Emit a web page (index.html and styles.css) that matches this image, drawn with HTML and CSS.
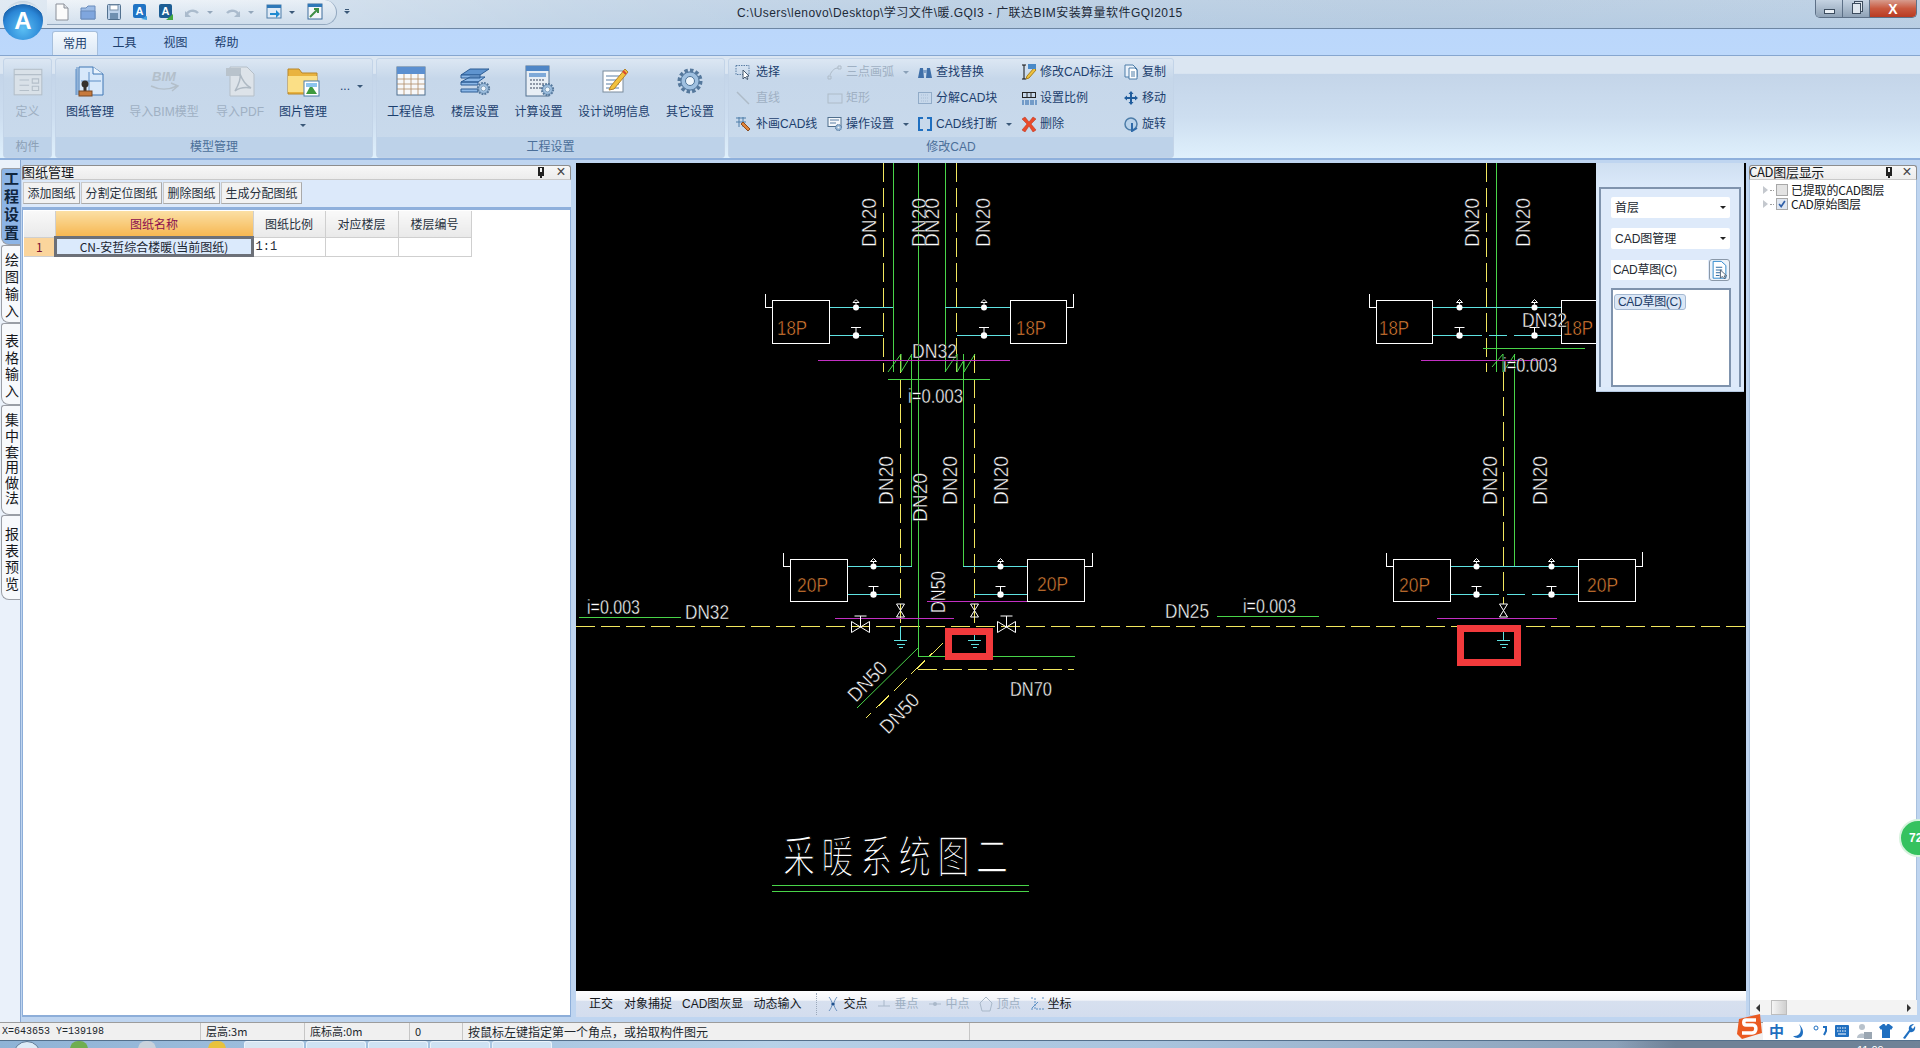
FILE: index.html
```html
<!DOCTYPE html>
<html lang="zh-CN">
<head>
<meta charset="utf-8">
<title>广联达BIM安装算量软件GQI2015</title>
<link rel="stylesheet" href="styles.css">
</head>
<body>
<svg class="defs" width="0" height="0" aria-hidden="true">
  <defs>
    <symbol id="gear" viewBox="0 0 32 32">
      <circle cx="16" cy="16" r="10" fill="#8fb4d8" stroke="#55789c" stroke-width="5" stroke-dasharray="3.2 2"/>
      <circle cx="16" cy="16" r="9" fill="#9fc0e0" stroke="#5b7ea3"/>
      <circle cx="16" cy="16" r="4.5" fill="#eef5fb" stroke="#4d7398"/>
    </symbol>
    <g id="vA"><path class="cy" d="M-4 0H4"/><circle class="wf" r="3"/><path class="wl" d="M0 -3V-5M-3 -5L0 -8L3 -5Z"/></g>
    <g id="vB"><path class="wl" d="M-5 -8H5M0 -8V0"/><circle class="wf" r="3.2"/></g>
    <path id="bowV" class="wl" d="M-4 -6.5H4L-4 6.5H4Z"/>
    <g id="bowH"><path class="wl" d="M-9 -5.5V5.5L9 -5.5V5.5ZM0 0V-11M-6 -11H6"/></g>
    <g id="gnd"><path class="cy" d="M-6.500 0.500H6.500M-4 4H4M-2 7H2"/></g>
  </defs>
</svg>

<header class="titlebar">
  <div class="orb"><span>A</span></div>
  <div class="qa">
    <svg class="qi" viewBox="0 0 16 18"><path d="M2 1H10L14 5V17H2Z" fill="#fbfbfb" stroke="#8a8f98"/><path d="M10 1V5H14" fill="#dfe3e8" stroke="#8a8f98"/></svg>
    <svg class="qi" viewBox="0 0 16 18"><path d="M1 5H6L8 3H15V16H1Z" fill="#9dbce6" stroke="#6a8cbc"/><path d="M1 8H15V16H1Z" fill="#7fa6de" stroke="#6a8cbc"/></svg>
    <svg class="qi" viewBox="0 0 16 18"><rect x="1.500" y="1.500" width="13" height="15" rx="1" fill="#bcd2ea" stroke="#52718f"/><rect x="4" y="2" width="8" height="5" fill="#fff" stroke="#7b92aa"/><rect x="4" y="10" width="8" height="6" fill="#6f90b0"/></svg>
    <svg class="qi" viewBox="0 0 16 18"><rect x="1" y="1" width="13" height="14" rx="2" fill="#1f73c4"/><text class="qa-a" x="7.500" y="12">A</text><path d="M9 16L15 13V17Z" fill="#3fa0e0"/></svg>
    <svg class="qi" viewBox="0 0 16 18"><rect x="1" y="1" width="13" height="14" rx="2" fill="#1c5d94"/><text class="qa-a" x="7.500" y="12">A</text><path d="M8 17L15 11V17Z" fill="#43a83f"/></svg>
    <svg class="qi qi-off" viewBox="0 0 16 18"><path d="M2 13A7 7 0 0 1 14 10" fill="none" stroke="#9fb1c4" stroke-width="2.500"/><path d="M1 8V14H7Z" fill="#9fb1c4"/></svg>
    <span class="caret caret-off"></span>
    <svg class="qi qi-off" viewBox="0 0 16 18"><path d="M14 13A7 7 0 0 0 2 10" fill="none" stroke="#9fb1c4" stroke-width="2.500"/><path d="M15 8V14H9Z" fill="#9fb1c4"/></svg>
    <span class="caret caret-off"></span>
    <svg class="qi" viewBox="0 0 16 18"><rect x="1" y="2" width="14" height="13" fill="#dfeaf6" stroke="#4c7ca8"/><rect x="1" y="2" width="14" height="3" fill="#2f78b8"/><path d="M4 10H10V7L14 11L10 15V12H4Z" fill="#1f8ad0"/></svg>
    <span class="caret"></span>
    <svg class="qi" viewBox="0 0 16 18"><rect x="1" y="1" width="14" height="15" fill="#f3f6fa" stroke="#3c6d9c"/><rect x="1" y="1" width="14" height="3" fill="#2f78b8"/><path d="M3 14L11 6M7 6H11V10" fill="none" stroke="#3f8f45" stroke-width="2"/></svg>
  </div>
  <span class="caret caret-more"></span>
  <h1 class="wintitle">C:\Users\lenovo\Desktop\学习文件\暖.GQI3 - 广联达BIM安装算量软件GQI2015</h1>
  <div class="winctl">
    <span class="wc wc-min"><i></i></span>
    <span class="wc wc-max"><i></i></span>
    <span class="wc wc-close">X</span>
  </div>
</header>

<nav class="tabs">
  <span class="tab tab-on">常用</span>
  <span class="tab">工具</span>
  <span class="tab">视图</span>
  <span class="tab">帮助</span>
</nav>

<section class="ribbon">
  <div class="group g-def">
    <div class="gbody">
      <div class="big off w-def">
        <svg class="bi" viewBox="0 0 32 32"><rect x="3" y="5" width="26" height="24" fill="#d9e1e8" stroke="#b4bfc9"/><path d="M3 10H29M8 15H17M8 20H17M8 25H17M20 14H26V18H20ZM20 21H26V25H20Z" fill="none" stroke="#b4bfc9"/></svg>
        <span>定义</span>
      </div>
    </div>
    <div class="glabel off-l">构件</div>
  </div>

  <div class="group g-model">
    <div class="gbody">
      <div class="big w-58">
        <svg class="bi" viewBox="0 0 34 34"><path d="M6 3H20L30 10V31H6Z" fill="#d7e8fa" stroke="#3f77b4"/><path d="M3 5V31M4 3V31" stroke="#5d8ec6"/><path d="M20 3V10H30" fill="#eaf3fc" stroke="#3f77b4"/><path d="M16 8V30M8 17H28" stroke="#5d8ec6"/><circle cx="12" cy="20" r="3.500" fill="#34302c"/><rect x="10.500" y="22" width="3" height="5" fill="#34302c"/><rect x="6" y="27" width="13" height="5" fill="#c77a3c" stroke="#7a4a26"/></svg>
        <span>图纸管理</span>
      </div>
      <div class="big off w-90">
        <svg class="bi" viewBox="0 0 34 34"><text class="bim" x="17" y="17">BIM</text><path d="M4 22C12 26 22 26 30 22M24 19L31 22L25 27" fill="none" stroke="#b3bfca" stroke-width="1.500"/></svg>
        <span>导入BIM模型</span>
      </div>
      <div class="big off w-62">
        <svg class="bi" viewBox="0 0 34 34"><path d="M7 3H24L31 10V32H7Z" fill="#dde3e9" stroke="#b5bfc8"/><rect x="3" y="4" width="15" height="8" fill="#b9c3cc"/><path d="M12 27C16 20 18 14 17 10C20 18 24 22 28 24C22 23 16 24 12 27Z" fill="none" stroke="#aeb9c3" stroke-width="1.500"/></svg>
        <span>导入PDF</span>
      </div>
      <div class="big w-64">
        <svg class="bi" viewBox="0 0 34 34"><path d="M2 5H13L16 9H31V30H2Z" fill="#e9b33f" stroke="#b9872a"/><path d="M2 12H31V28H2Z" fill="#fbdf86"/><rect x="18" y="17" width="15" height="15" fill="#fff" stroke="#4f7fa8"/><path d="M20 30L25 21L31 30Z" fill="#3e9a3e"/><rect x="20" y="19" width="11" height="4" fill="#8cc4ee"/></svg>
        <span>图片管理</span>
        <i class="caret big-caret"></i>
      </div>
      <div class="more"><span>...</span><i class="caret"></i></div>
    </div>
    <div class="glabel">模型管理</div>
  </div>

  <div class="group g-proj">
    <div class="gbody">
      <div class="big w-64">
        <svg class="bi" viewBox="0 0 34 34"><rect x="3" y="3" width="28" height="28" fill="#f7f8fa" stroke="#51708f"/><rect x="3" y="3" width="28" height="7" fill="#5b8fd0"/><path d="M3 15H31M3 20H31M3 25H31M10 10V31M17 10V31M24 10V31" stroke="#b08a66" stroke-width=".8"/></svg>
        <span>工程信息</span>
      </div>
      <div class="big w-64">
        <svg class="bi" viewBox="0 0 34 34"><path d="M3 11L12 5H31L22 11Z" fill="#5f94cf" stroke="#2d5d94"/><path d="M3 11H22V14H3ZM3 18L12 13H27L20 18ZM3 18H20V21H3ZM3 25H20V28H3Z" fill="#8cb8e8" stroke="#2d5d94"/><use href="#gear" x="17" y="16" width="17" height="17"/></svg>
        <span>楼层设置</span>
      </div>
      <div class="big w-63">
        <svg class="bi" viewBox="0 0 34 34"><rect x="4" y="2" width="23" height="30" fill="#e8eef5" stroke="#53718f"/><rect x="4" y="2" width="23" height="5" fill="#4f86c6"/><rect x="7" y="9" width="17" height="4" fill="#7fa9d8"/><path d="M8 16H23M8 20H23M8 24H23" stroke="#8f98a8" stroke-width="2" stroke-dasharray="2 1"/><use href="#gear" x="17" y="17" width="17" height="17"/></svg>
        <span>计算设置</span>
      </div>
      <div class="big w-88">
        <svg class="bi" viewBox="0 0 34 34"><rect x="6" y="7" width="20" height="21" fill="#fff" stroke="#7a8b9c"/><path d="M9 12H22M9 16H22M9 20H22M9 24H22" stroke="#5a7ea5"/><path d="M14 22L28 5L31 8L17 25L12 26Z" fill="#f2c23e" stroke="#b2802a"/><path d="M26 7L29 10" stroke="#d8442e" stroke-width="2"/></svg>
        <span>设计说明信息</span>
      </div>
      <div class="big w-64">
        <svg class="bi" viewBox="0 0 34 34"><use href="#gear" x="1" y="1" width="32" height="32"/></svg>
        <span>其它设置</span>
      </div>
    </div>
    <div class="glabel">工程设置</div>
  </div>

  <div class="group g-cad">
    <div class="gbody smalls">
      <div class="sm c1st"><svg class="si" viewBox="0 0 16 16"><rect x="1" y="1.500" width="13" height="9" fill="none" stroke="#5a7ea5" stroke-dasharray="1.500 1"/><path d="M8 6V15L10 13L12 15.500L13 15L11.500 12.500L14 12Z" fill="#fff" stroke="#44586e"/></svg><span>选择</span></div>
      <div class="sm off"><svg class="si" viewBox="0 0 16 16"><path d="M1 15V12H4V15ZM3 11C5 6 8 4 11 4M11 2H14V5H11Z" fill="none" stroke="#aebbc8"/></svg><span>三点画弧</span><i class="caret caret-off"></i></div>
      <div class="sm"><svg class="si" viewBox="0 0 16 16"><path d="M3 4H6L7 14H1ZM10 4H13L15 14H9Z" fill="#3f6fa8"/><path d="M6 6H10V9H6Z" fill="#7ea0c8"/></svg><span>查找替换</span></div>
      <div class="sm"><svg class="si si-cad" viewBox="0 0 16 16"><path d="M3 1V15" stroke="#111"/><path d="M1 1H5M1 15H5" stroke="#111"/><path d="M6 12L13 4L15 6L8 14L5 15Z" fill="#f0c23c" stroke="#a67f20"/><rect x="7" y="0" width="8" height="5" fill="#4a8ac8"/></svg><span>修改CAD标注</span></div>
      <div class="sm"><svg class="si" viewBox="0 0 16 16"><path d="M2 1H10L14 5V13H2Z" fill="#eaf2fb" stroke="#4c7ca8"/><path d="M6 4H12L14 6V15H6Z" fill="#fff" stroke="#4c7ca8"/><path d="M8 8H12M8 10H12M8 12H12" stroke="#4c7ca8"/></svg><span>复制</span></div>

      <div class="sm off c1st"><svg class="si" viewBox="0 0 16 16"><path d="M2 2L14 14" stroke="#aebbc8" stroke-width="1.500"/></svg><span>直线</span></div>
      <div class="sm off"><svg class="si" viewBox="0 0 16 16"><rect x="1" y="4" width="14" height="9" fill="none" stroke="#aebbc8"/></svg><span>矩形</span></div>
      <div class="sm"><svg class="si" viewBox="0 0 16 16"><rect x="1.500" y="2.500" width="13" height="11" fill="none" stroke="#5a7ea5" stroke-dasharray="1 1"/><path d="M4 5H12M4 8H12M4 11H12" stroke="#a9bed6" stroke-dasharray="1 1"/></svg><span>分解CAD块</span></div>
      <div class="sm"><svg class="si" viewBox="0 0 16 16"><rect x="1.500" y="2.500" width="13" height="5" fill="none" stroke="#222"/><path d="M6 3V7M10 3V7" stroke="#222"/><path d="M2 10V15M5 10V15M7 10V15M10 10V15M12 10V15M15 10V15" stroke="#1f5fa5"/></svg><span>设置比例</span></div>
      <div class="sm"><svg class="si" viewBox="0 0 16 16"><path d="M8 1L10.500 4H9V7H12V5.500L15 8L12 10.500V9H9V12H10.500L8 15L5.500 12H7V9H4V10.500L1 8L4 5.500V7H7V4H5.500Z" fill="#1f5c9c"/></svg><span>移动</span></div>

      <div class="sm c1st"><svg class="si" viewBox="0 0 16 16"><path d="M1 2H11M1 6H11M4 1V11M8 1V11" stroke="#4c7ca8"/><path d="M6 8L13 15L15 13L8 6Z" fill="#e0853a" stroke="#8a4c20"/></svg><span>补画CAD线</span></div>
      <div class="sm"><svg class="si" viewBox="0 0 16 16"><rect x="1" y="1.500" width="13" height="9" fill="#f3f7fb" stroke="#4f6e8c"/><path d="M3 4H12M3 7H9" stroke="#5a7ea5"/><use href="#gear" x="7" y="7" width="9" height="9"/></svg><span>操作设置</span><i class="caret"></i></div>
      <div class="sm"><svg class="si" viewBox="0 0 16 16"><path d="M6 2H2V14H6M10 2H14V14H10" fill="none" stroke="#1f6fc0" stroke-width="2"/></svg><span>CAD线打断</span><i class="caret"></i></div>
      <div class="sm"><svg class="si" viewBox="0 0 16 16"><path d="M1 3L4 1L8 6L12 1L15 3L10 8L15 14L12 16L8 10L4 16L1 14L6 8Z" fill="#ea4a2a" stroke="#b63018" stroke-width=".5"/></svg><span>删除</span></div>
      <div class="sm"><svg class="si" viewBox="0 0 16 16"><circle cx="8" cy="8" r="6" fill="#b9d2ea" stroke="#4c7ca8" stroke-width="1.500"/><path d="M9 7V15L14 12" fill="none" stroke="#2f6aa8" stroke-width="2"/></svg><span>旋转</span></div>
    </div>
    <div class="glabel">修改CAD</div>
  </div>
</section>

<main class="main">
  <aside class="vtabs">
    <span class="vt vt-on">工程设置</span>
    <span class="vt vt-a">绘图输入</span>
    <span class="vt vt-b">表格输入</span>
    <span class="vt vt-c">集中套用做法</span>
    <span class="vt vt-d">报表预览</span>
  </aside>

  <section class="left">
    <div class="ptitle"><span>图纸管理</span><b class="pin"></b><b class="px">×</b></div>
    <div class="toolbar">
      <button class="tb">添加图纸</button><button class="tb">分割定位图纸</button><button class="tb">删除图纸</button><button class="tb">生成分配图纸</button>
    </div>
    <div class="gridwrap">
      <table class="sheet">
        <thead>
          <tr><th class="c0"></th><th class="c1 hot">图纸名称</th><th class="c2">图纸比例</th><th class="c3">对应楼层</th><th class="c3">楼层编号</th></tr>
        </thead>
        <tbody>
          <tr><td class="rowno">1</td><td class="sel">CN-安哲综合楼暖(当前图纸)</td><td class="lft">1:1</td><td></td><td></td></tr>
        </tbody>
      </table>
    </div>
  </section>

  <section class="center">
    <div class="canvas">
      <svg class="cad" viewBox="576 163 1170 828">
        <g class="yl">
          <path d="M883.500 163V372M956.500 163V372M900.500 354V626M974.500 354V626"/>
          <path d="M1486.500 163V372M1503.500 372V604"/>
          <path d="M576 626.500H1746"/>
          <path d="M918 669.500H1074M943 643L866 718"/>
        </g>
        <g class="gr">
          <path d="M893.500 163V372M918.500 163V656.500H1075M945.500 163V372M911.500 354V566.500H848M963.500 354V566.500H1027"/>
          <path d="M888 379.500H990M579 617.500H681M1217 616.500H1319M772 885.500H1029M772 891.500H1029"/>
          <path d="M1496.500 163V372M1514.500 354V566.500M1483 348.500H1585"/>
          <path class="sl" d="M888 372L901 354V372L912 354M945 372L957 354V372L964 360V372L975 354M1492 367L1503 354V372L1515 354M918 648L857 708"/>
        </g>
        <g class="mg">
          <path d="M818 360.500H1010M835 618.500H954M927 601.500H1027M1421 360.500H1540M1437 618.500H1557"/>
        </g>
        <g class="cy">
          <path d="M830 307.500H893M830 335.500H883M945 307.500H1010M957 335.500H1010"/>
          <path d="M848 566.500H912M848 594.500H900M963 566.500H1027M974 594.500H1027"/>
          <path d="M1433 307.500H1561M1433 335.500H1482M1489 335.500H1507M1514 335.500H1561"/>
          <path d="M1451 566.500H1578M1451 594.500H1499M1507 594.500H1525M1532 594.500H1578"/>
          <path d="M900.500 626V640M974.500 635V640M1503.500 626V640"/>
        </g>
        <g class="wh">
          <rect x="772.500" y="300.500" width="57" height="43"/><rect x="1010.500" y="300.500" width="56" height="43"/>
          <path d="M765.500 294V307.500H772M1073.500 294V307.500H1067"/>
          <rect x="790.500" y="559.500" width="57" height="42"/><rect x="1027.500" y="559.500" width="57" height="42"/>
          <path d="M783.500 553V566.500H790M1092.500 553V566.500H1085"/>
          <rect x="1376.500" y="300.500" width="56" height="43"/><rect x="1561.500" y="300.500" width="60" height="43"/>
          <path d="M1369.500 294V307.500H1376"/>
          <rect x="1393.500" y="559.500" width="57" height="42"/><rect x="1578.500" y="559.500" width="57" height="42"/>
          <path d="M1386.500 553V566.500H1393M1642.500 552V566.500H1636"/>
        </g>
        <use href="#vA" x="856" y="307.500"/><use href="#vB" x="856" y="335.500"/>
        <use href="#vA" x="984" y="307.500"/><use href="#vB" x="984" y="335.500"/>
        <use href="#vA" x="873.500" y="566.500"/><use href="#vB" x="873.500" y="594.500"/>
        <use href="#vA" x="1000.500" y="566.500"/><use href="#vB" x="1000.500" y="594.500"/>
        <use href="#vA" x="1459.500" y="307.500"/><use href="#vB" x="1459.500" y="335.500"/>
        <use href="#vA" x="1534.500" y="307.500"/><use href="#vB" x="1534.500" y="335.500"/>
        <use href="#vA" x="1476.500" y="566.500"/><use href="#vB" x="1476.500" y="594.500"/>
        <use href="#vA" x="1551.500" y="566.500"/><use href="#vB" x="1551.500" y="594.500"/>
        <use href="#bowV" x="900.500" y="610.500"/><use href="#bowV" x="974.500" y="610.500"/><use href="#bowV" x="1503.500" y="610.500"/>
        <use href="#bowH" x="860.500" y="627"/><use href="#bowH" x="1006.500" y="627"/>
        <use href="#gnd" x="900.500" y="640"/><use href="#gnd" x="974.500" y="640"/><use href="#gnd" x="1503.500" y="640"/>

        <rect class="redbox" x="948.500" y="631.500" width="41" height="25"/>
        <rect class="redbox" x="1460.500" y="628.500" width="57" height="34"/>

        <g class="cadt">
          <text transform="translate(876 247) rotate(-90)" textLength="49" lengthAdjust="spacingAndGlyphs">DN20</text>
          <text transform="translate(926 247) rotate(-90)" textLength="49" lengthAdjust="spacingAndGlyphs">DN20</text>
          <text transform="translate(939 247) rotate(-90)" textLength="49" lengthAdjust="spacingAndGlyphs">DN20</text>
          <text transform="translate(990 247) rotate(-90)" textLength="49" lengthAdjust="spacingAndGlyphs">DN20</text>
          <text transform="translate(893 505) rotate(-90)" textLength="49" lengthAdjust="spacingAndGlyphs">DN20</text>
          <text transform="translate(927 522) rotate(-90)" textLength="49" lengthAdjust="spacingAndGlyphs">DN20</text>
          <text transform="translate(957 505) rotate(-90)" textLength="49" lengthAdjust="spacingAndGlyphs">DN20</text>
          <text transform="translate(1008 505) rotate(-90)" textLength="49" lengthAdjust="spacingAndGlyphs">DN20</text>
          <text transform="translate(945 613) rotate(-90)" textLength="42" lengthAdjust="spacingAndGlyphs">DN50</text>
          <text transform="translate(1479 247) rotate(-90)" textLength="49" lengthAdjust="spacingAndGlyphs">DN20</text>
          <text transform="translate(1530 247) rotate(-90)" textLength="49" lengthAdjust="spacingAndGlyphs">DN20</text>
          <text transform="translate(1497 505) rotate(-90)" textLength="49" lengthAdjust="spacingAndGlyphs">DN20</text>
          <text transform="translate(1547 505) rotate(-90)" textLength="49" lengthAdjust="spacingAndGlyphs">DN20</text>
          <text transform="translate(856 703) rotate(-46)" textLength="47" lengthAdjust="spacingAndGlyphs">DN50</text>
          <text transform="translate(888 735) rotate(-46)" textLength="47" lengthAdjust="spacingAndGlyphs">DN50</text>
          <text x="912" y="358" textLength="45" lengthAdjust="spacingAndGlyphs">DN32</text>
          <text x="685" y="619" textLength="44" lengthAdjust="spacingAndGlyphs">DN32</text>
          <text x="1522" y="327" textLength="45" lengthAdjust="spacingAndGlyphs">DN32</text>
          <text x="1010" y="696" textLength="42" lengthAdjust="spacingAndGlyphs">DN70</text>
          <text x="1165" y="618" textLength="44" lengthAdjust="spacingAndGlyphs">DN25</text>
          <text x="908" y="403" textLength="55" lengthAdjust="spacingAndGlyphs">i=0.003</text>
          <text x="587" y="614" textLength="53" lengthAdjust="spacingAndGlyphs">i=0.003</text>
          <text x="1503" y="372" textLength="54" lengthAdjust="spacingAndGlyphs">i=0.003</text>
          <text x="1243" y="613" textLength="53" lengthAdjust="spacingAndGlyphs">i=0.003</text>
        </g>
        <g class="capt">
          <text x="777" y="335" textLength="30" lengthAdjust="spacingAndGlyphs">18P</text>
          <text x="1016" y="335" textLength="30" lengthAdjust="spacingAndGlyphs">18P</text>
          <text x="1379" y="335" textLength="30" lengthAdjust="spacingAndGlyphs">18P</text>
          <text x="1563" y="335" textLength="30" lengthAdjust="spacingAndGlyphs">18P</text>
          <text x="797" y="592" textLength="31" lengthAdjust="spacingAndGlyphs">20P</text>
          <text x="1037" y="591" textLength="31" lengthAdjust="spacingAndGlyphs">20P</text>
          <text x="1399" y="592" textLength="31" lengthAdjust="spacingAndGlyphs">20P</text>
          <text x="1587" y="592" textLength="31" lengthAdjust="spacingAndGlyphs">20P</text>
        </g>
        <text class="cadtitle" transform="translate(783 873) scale(1 1.4)" textLength="225" lengthAdjust="spacing">采暖系统图二</text>
      </svg>
      <div class="floating">
        <div class="fl-inner">
          <div class="combo"><span>首层</span><i class="cdrop"></i></div>
          <div class="combo"><span>CAD图管理</span><i class="cdrop"></i></div>
          <div class="inputrow">
            <div class="input">CAD草图(C)</div>
            <span class="ibtn"><svg viewBox="0 0 20 22"><path d="M3 1.500H12L17 6V20H3Z" fill="#fff" stroke="#1f7fc8"/><path d="M6 8H13M6 11H13M6 14H11M6 17H10" stroke="#1b5d97"/><path d="M11 11V20L13 18L15 20.500L16.500 20L15 17.500H18Z" fill="#fff" stroke="#4a5c6e"/></svg></span>
          </div>
          <div class="listbox"><span class="chip">CAD草图(C)</span></div>
        </div>
      </div>
    </div>
    <div class="snapbar">
      <span class="sn sn1">正交</span><span class="sn sn2">对象捕捉</span><span class="sn sn3">CAD图灰显</span><span class="sn sn4">动态输入</span>
      <i class="snsep"></i>
      <span class="sni"><svg viewBox="0 0 14 16"><path d="M3 1C7 6 7 10 3 15M11 1C7 6 7 10 11 15" fill="none" stroke="#6d93c0"/><circle cx="7" cy="8" r="1.500" fill="#1d4f8c"/></svg><b>交点</b></span>
      <span class="sni off"><svg viewBox="0 0 14 16"><path d="M1 10H13M7 4V10" stroke="#a9b8c9"/></svg><b>垂点</b></span>
      <span class="sni off"><svg viewBox="0 0 14 16"><path d="M1 8H13" stroke="#a9b8c9"/><circle cx="7" cy="8" r="2" fill="#a9b8c9"/></svg><b>中点</b></span>
      <span class="sni off"><svg viewBox="0 0 14 16"><path d="M7 1L13 7L11 15H3L1 7Z" fill="none" stroke="#a9b8c9"/></svg><b>顶点</b></span>
      <span class="sni"><svg viewBox="0 0 14 16"><path d="M5 2V13H14" fill="none" stroke="#5a8fc4" stroke-dasharray="2 1"/><path d="M1 2H3M12 2H14M1 13H3" stroke="#5a8fc4"/><path d="M2 12L8 6" stroke="#5a8fc4"/></svg><b>坐标</b></span>
    </div>
  </section>

  <aside class="right">
    <div class="ptitle ptitle-r"><span>CAD图层显示</span><b class="pin"></b><b class="px">×</b></div>
    <div class="tree">
      <div class="node"><i class="exp"></i><i class="lead"></i><i class="chk"></i><span>已提取的CAD图层</span></div>
      <div class="node"><i class="exp"></i><i class="lead"></i><i class="chk chk-on"><svg viewBox="0 0 12 12"><path d="M2.500 6L5 9L9.500 2.500" fill="none" stroke="#2f5fa8" stroke-width="2"/></svg></i><span>CAD原始图层</span></div>
    </div>
    <div class="hscroll"><i class="arrow-l"></i><b class="thumb"></b><i class="arrow-r"></i></div>
  </aside>
</main>

<footer class="status">
  <span class="st st1">X=643653 Y=139198</span>
  <span class="st st2">层高:3m</span>
  <span class="st st3">底标高:0m</span>
  <span class="st st4">0</span>
  <span class="st st5">按鼠标左键指定第一个角点，或拾取构件图元</span>
  <span class="st st6"></span>
</footer>

<div class="taskbar">
  <i class="start"></i>
  <i class="tk-ic tk-a"></i><i class="tk-ic tk-b"></i><i class="tk-ic tk-c"></i>
  <i class="tk tk1"></i><i class="tk"></i><i class="tk"></i><i class="tk"></i><i class="tk"></i>
  <span class="tray"><span class="clock">11:09</span></span>
</div>

<div class="badge72"><span>72</span></div>

<div class="ime">
  <svg class="ime-s" viewBox="0 0 27 27"><path d="M3 6L24 1L26 20L6 26L1 21Z" fill="#ea5a21"/><path d="M20 7H10C7 7 7 12 10 12H17C21 12 21 20 16 20H6" fill="none" stroke="#fff" stroke-width="3.500"/></svg>
  <div class="ime-bar">
    <b class="ime-zh">中</b>
    <svg viewBox="0 0 16 16"><path d="M9 1C13 7 10 14 3 13C6 16 13 16 13 9C13 6 11 3 9 1Z" fill="#1f6fc0"/></svg>
    <svg viewBox="0 0 16 16"><circle cx="4" cy="5" r="2" fill="none" stroke="#1f6fc0"/><path d="M11 4H14V8L12 12" fill="none" stroke="#1f6fc0" stroke-width="2"/></svg>
    <svg viewBox="0 0 16 16"><rect x="1" y="2" width="14" height="12" rx="1" fill="#1f6fc0"/><path d="M3 5H13M3 8H13" stroke="#fff" stroke-dasharray="1.500 1"/><path d="M4 11H12" stroke="#fff"/></svg>
    <svg viewBox="0 0 16 16"><circle cx="6" cy="4" r="3" fill="#b8c2cc"/><path d="M1 15C1 9 11 9 11 15Z" fill="#b8c2cc"/><rect x="8" y="9" width="8" height="7" fill="#9aa6b2"/></svg>
    <svg viewBox="0 0 16 16"><path d="M5 1L1 4L3 7L4 6V15H12V6L13 7L15 4L11 1H9.500L8 3L6.500 1Z" fill="#1f6fc0"/></svg>
    <svg viewBox="0 0 16 16"><path d="M3 15L9 7C8 3 11 1 14 1L11 4L13 6L15 3C16 7 13 10 10 9L5 16Z" fill="#1f6fc0"/></svg>
  </div>
</div>
</body>
</html>
```

FILE: styles.css
```css
* { box-sizing: border-box; }
html, body { margin: 0; padding: 0; }
body {
  position: relative;
  width: 1920px;
  height: 1048px;
  overflow: hidden;
  display: flex;
  flex-direction: column;
  background: #bfd5f0;
  font: 12px/16px "Liberation Sans", "Noto Sans CJK SC", sans-serif;
  color: #1c3f6e;
}
.defs { position: absolute; }

/* title bar */
.titlebar {
  position: relative;
  flex: none;
  height: 29px;
  display: flex;
  align-items: flex-start;
  padding-left: 47px;
  border-bottom: 1px solid #6d86a3;
  background:
    linear-gradient(90deg, rgba(255,255,255,.55) 0, rgba(255,255,255,.18) 30%, rgba(255,255,255,.05) 50%, rgba(190,205,222,.2) 75%, rgba(255,255,255,.05) 100%),
    linear-gradient(180deg, #bcd0e4, #b4cbe2);
}
.orb {
  position: absolute;
  left: 3px; top: 1px;
  width: 40px; height: 39px;
  border-radius: 50%;
  z-index: 3;
  display: flex;
  align-items: center;
  justify-content: center;
  background: radial-gradient(circle at 50% 70%, #5cc0f4 0, #2a86d6 55%, #1c66b0 70%, #dbe6ef 72%, #8fa6bc 100%);
}
.orb span { font: bold 24px/1 "Liberation Sans", sans-serif; color: #fff; }
.qa {
  display: flex;
  align-items: center;
  gap: 10px;
  width: 290px;
  height: 25px;
  padding-left: 7px;
  border: 1px solid #93a9c0;
  border-top: 0;
  border-left: 0;
  border-radius: 0 0 14px 0 / 0 0 14px 0;
  border-top-right-radius: 14px;
  background: linear-gradient(180deg, rgba(255,255,255,.5), rgba(205,220,235,.5));
}
.qi { width: 16px; height: 18px; flex: none; }
.qi-off { opacity: .8; }
.qa-a { font: bold 11px/1 "Liberation Sans", sans-serif; fill: #fff; text-anchor: middle; }
.caret {
  display: inline-block;
  width: 0; height: 0;
  border-left: 3px solid transparent;
  border-right: 3px solid transparent;
  border-top: 3px solid #3a5878;
  flex: none;
}
.qa .caret { margin-left: -3px; margin-right: 2px; }
.caret-off { opacity: .45; }
.caret-more { margin: 11px 0 0 7px; box-shadow: 0 -3px 0 -1px #3a5878; }
.wintitle {
  position: absolute;
  left: 737px; top: 5px;
  margin: 0;
  font: 12px/16px "Liberation Sans", "Noto Sans CJK SC", sans-serif;
  letter-spacing: .45px;
  color: #1d2a38;
  white-space: nowrap;
}
.winctl {
  margin-left: auto;
  margin-right: 3px;
  display: flex;
  height: 18px;
  border: 1px solid #5d7087;
  border-top: 0;
  border-radius: 0 0 5px 5px;
  overflow: hidden;
}
.wc { display: flex; align-items: center; justify-content: center; height: 17px; }
.wc-min, .wc-max { width: 27px; background: linear-gradient(180deg, #c5d3e2, #8fa2b6); border-right: 1px solid #5d7087; }
.wc-min i { display: block; width: 11px; height: 5px; margin-top: 5px; background: #eaf0f6; border: 1px solid #3c4c5e; }
.wc-max i { display: block; width: 9px; height: 11px; background: #dfe7ef; border: 1px solid #3c4c5e; box-shadow: 2px -2px 0 -1px #dfe7ef, 2px -2px 0 0 #3c4c5e; }
.wc-close { width: 46px; background: linear-gradient(180deg, #d79c8e 0, #c9593f 50%, #b83a22 100%); color: #fff; font: bold 14px/1 "Liberation Sans", sans-serif; }

/* tabs */
.tabs {
  flex: none;
  height: 26px;
  display: flex;
  padding-left: 52px;
  background: linear-gradient(180deg, #bbd7fb, #bcd8fb);
}
.tab { width: 51px; text-align: center; line-height: 28px; }
.tab-on {
  width: 46px;
  margin: 2px 1px 0 0;
  line-height: 24px;
  background: linear-gradient(180deg, #f4f9fe, #dce8f5);
  border: 1px solid #a6bfdc;
  border-bottom: 0;
  border-radius: 3px 3px 0 0;
}

/* ribbon */
.ribbon {
  flex: none;
  height: 105px;
  display: flex;
  padding: 2px 3px 0 3px;
  gap: 3px;
  border-top: 1px solid #86a6cf;
  border-bottom: 2px solid #8eb0dc;
  background: linear-gradient(180deg, #dbe6f2 0, #dbe6f2 17%, #c4d5e9 18%, #cddef0 60%, #dff0fc 100%);
}
.group {
  display: flex;
  flex-direction: column;
  border: 1px solid #c3d4e8;
  border-radius: 3px;
  background: linear-gradient(180deg, #dce7f3 0, #c6d7ea 20%, #c9daec 100%);
}
.g-def { width: 49px; }
.g-model { width: 318px; }
.g-proj { width: 349px; }
.g-cad { width: 446px; }
.gbody { flex: 1; display: flex; padding-top: 5px; min-height: 0; }
.g-model .gbody { padding-left: 5px; }
.g-proj .gbody { padding-left: 2px; }
.glabel {
  flex: none;
  height: 20px;
  line-height: 21px;
  text-align: center;
  color: #4b6f99;
  background: #bdd2e9;
}
.off-l { color: #8ca0b6; }
.big {
  position: relative;
  flex: none;
  display: flex;
  flex-direction: column;
  align-items: center;
  white-space: nowrap;
}
.big span { margin-top: 6px; }
.bi { width: 34px; height: 34px; flex: none; }
.off, .off span, .off b { color: #9fb0c3; }
.w-def { width: 47px; }
.w-58 { width: 58px; }
.w-90 { width: 90px; }
.w-62 { width: 62px; }
.w-64 { width: 64px; }
.w-63 { width: 63px; }
.w-88 { width: 88px; }
.big-caret { margin-top: 4px; }
.more { display: flex; align-items: center; gap: 7px; height: 24px; margin: 10px 0 0 5px; color: #1c3f6e; }
.bim { font: italic bold 13px/1 "Liberation Sans", sans-serif; fill: #b3bfca; text-anchor: middle; }

.smalls {
  display: grid;
  grid-template-columns: 92px 90px 104px 102px 1fr;
  grid-auto-rows: 26px;
  padding: 0 0 0 6px;
  align-content: start;
}
.sm { display: flex; align-items: center; gap: 3px; white-space: nowrap; }
.c1st { gap: 5px; }
.sm .caret { margin-left: 6px; }
.si { width: 16px; height: 16px; flex: none; }

/* main */
.main { flex: 1; min-height: 0; display: flex; }
.vtabs {
  flex: none;
  width: 21px;
  display: flex;
  flex-direction: column;
  padding-top: 8px;
  background: #eaf1fa;
  border-right: 1px solid #8aa9d3;
}
.vt {
  writing-mode: vertical-rl;
  text-orientation: upright;
  display: block;
  flex: none;
  width: 19px;
  margin-left: 1px;
  font: 14px/17px "Noto Sans CJK SC", sans-serif;
  letter-spacing: 3px;
  white-space: nowrap;
  color: #16181c;
  background: #f7f9fc;
  border: 1px solid #9a9ea6;
  border-right: 0;
  border-radius: 3px 0 0 8px;
  text-align: center;
  overflow: hidden;
}
.vt-on { height: 77px; background: #8cb4e6; font-weight: 700; color: #10263f; font-size: 15px; letter-spacing: 3px; }
.vt-a { height: 78px; padding-top: 6px; }
.vt-b { height: 82px; padding-top: 6px; letter-spacing: 2.500px; }
.vt-c { height: 110px; padding-top: 0; letter-spacing: 1.600px; }
.vt-d { height: 85px; padding-top: 4px; letter-spacing: 2.500px; }

.left {
  flex: none;
  width: 552px;
  display: flex;
  flex-direction: column;
  padding: 5px 2px 5px 1px;
  background: #bfd5f0;
}
.ptitle {
  flex: none;
  height: 15px;
  display: flex;
  align-items: center;
  padding-bottom: 2px;
  background: linear-gradient(180deg, #f7f7f7, #ececec);
  border: 1px solid #8d8d8d;
  border-bottom-color: #c9c9c9;
  border-radius: 3px 3px 0 0;
  font: 13px/13px "Noto Sans CJK SC", sans-serif;
  color: #15181c;
}
.ptitle span { margin-left: -1px; }
.pin {
  width: 6px; height: 9px;
  margin-left: auto;
  border: 2px solid #222;
  border-bottom-width: 4px;
  border-top-width: 1px;
  position: relative;
}
.pin::after { content: ""; position: absolute; left: 0; top: 6px; width: 2px; height: 4px; background: #222; }
.px { width: 18px; margin-left: 8px; font: normal 16px/12px "Liberation Sans", sans-serif; color: #444; text-align: center; }
.toolbar {
  flex: none;
  height: 30px;
  display: flex;
  align-items: flex-start;
  padding: 2px 0 0 1px;
  gap: 1px;
  background: #dce9fa;
  border-bottom: 3px solid #8fb0dc;
}
.tb {
  height: 22px;
  padding: 0 3.500px;
  margin: 0;
  font: 12px/20px "Noto Sans CJK SC", sans-serif;
  color: #26303c;
  background: #f2f2f2;
  border: 1px solid #c8c8c8;
  border-right-color: #a9a9a9;
  border-bottom-color: #a9a9a9;
}
.gridwrap {
  flex: 1;
  padding: 1px 0 0 1px;
  background: #fff;
  border-left: 1px solid #8daed9;
  border-right: 1px solid #8daed9;
  border-bottom: 2px solid #8daed9;
}
.sheet { border-collapse: collapse; table-layout: fixed; width: 447px; }
.sheet th, .sheet td {
  padding: 0;
  font: normal 12px/16px "Noto Sans CJK SC", sans-serif;
  text-align: center;
  color: #26303c;
  border: 1px solid #cfcfcf;
}
.sheet th { height: 26px; background: linear-gradient(180deg, #f9f9f9, #e9e9e9); border-top: 0; }
.sheet td { height: 19px; }
.c0 { width: 31px; border-left: 0 !important; }
.c1 { width: 198px; }
.c2 { width: 72px; }
.c3 { width: 73px; }
.sheet .hot { background: linear-gradient(180deg, #fbdfa4, #f6b64f); color: #8b0f4f; }
.sheet .rowno { background: #fbd59c; color: #7a1232; border-left: 0; }
.sheet .sel { background: #dbeafc; outline: 3px solid #6c7078; outline-offset: -2px; color: #1a2430; }
.sheet .lft { text-align: left; padding-left: 2px; font-family: "Liberation Mono", monospace; }

/* centre */
.center {
  flex: none;
  width: 1173px;
  display: flex;
  flex-direction: column;
  padding: 3px 0 5px 3px;
}
.canvas { position: relative; flex: 1; min-height: 0; background: #000; }
.cad { display: block; width: 1170px; height: 828px; }
.yl path, .gr path, .mg path, .cy path, .cy, .wh rect, .wh path, .wl { fill: none; stroke-width: 1; shape-rendering: crispEdges; }
.yl path { stroke: #f2e75e; stroke-dasharray: 19 6; }
.gr path { stroke: #49d449; }
.gr .sl { shape-rendering: auto; }
.mg path { stroke: #c22fc2; }
.cy path, .cy { stroke: #5fe2e2; }
.wh rect, .wh path { stroke: #fff; }
.wl { stroke: #fff; shape-rendering: auto; }
.wf { fill: #fff; stroke: none; }
.redbox { fill: none; stroke: #f23a3c; stroke-width: 7; }
.cadt text, .capt text {
  font: 20px "Liberation Sans", sans-serif;
  paint-order: fill stroke;
  stroke: #000;
}
.cadt text { fill: #fff; stroke-width: .42px; }
.capt text { fill: #ef8a3a; stroke-width: .6px; }
.cadtitle {
  font: 32px "Noto Sans CJK SC", sans-serif;
  fill: #fff;
  stroke: #000;
  stroke-width: 1.100px;
  paint-order: fill stroke;
}

.floating {
  position: absolute;
  left: 1020px; top: 0;
  width: 148px;
  height: 229px;
  padding: 24px 3px 4px;
  background: linear-gradient(180deg, #cfdff1, #dbe9fa 24px);
  border-bottom: 1px solid #b5c9e2;
}
.fl-inner {
  height: 100%;
  display: flex;
  flex-direction: column;
  padding: 8px 9px 0 10px;
  gap: 10px;
  background: #deeafa;
  border: 2px solid #7f93ad;
  border-bottom: 0;
}
.combo {
  display: flex;
  align-items: center;
  justify-content: space-between;
  height: 21px;
  flex: none;
  padding: 0 4px;
  color: #22282f;
  background: #fff;
  border-radius: 2px;
}
.cdrop { width: 0; height: 0; border: 3.500px solid transparent; border-top-color: #222; border-bottom: 0; }
.inputrow { display: flex; align-items: center; height: 22px; flex: none; }
.input { flex: 1; height: 20px; padding-left: 2px; background: #fff; line-height: 20px; letter-spacing: -.3px; color: #22282f; }
.ibtn { flex: none; width: 21px; height: 22px; margin-left: 1px; background: #edf3fa; border: 1px solid #8a98a8; border-radius: 3px; display: flex; }
.ibtn svg { width: 19px; height: 20px; }
.listbox {
  flex: none;
  height: 99px;
  margin: -3px -1px 0 0;
  padding: 4px 1px;
  background: #fff;
  border: 2px solid #7f93ad;
}
.chip {
  display: inline-block;
  height: 16px;
  padding: 0 3px;
  line-height: 15px;
  letter-spacing: -.3px;
  color: #1d3c66;
  background: #dbe7f6;
  border: 1px solid #a5b9d2;
  border-radius: 3px;
}

.snapbar {
  flex: none;
  height: 26px;
  display: flex;
  align-items: center;
  background: linear-gradient(180deg, #fdfdfe 0, #f3f5f9 35%, #d7e0ef 40%, #d3ddee 100%);
  color: #15181c;
  white-space: nowrap;
}
.sn1 { margin-left: 13px; }
.sn2 { margin-left: 11px; }
.sn3 { margin-left: 10px; }
.sn4 { margin-left: 10px; }
.snsep { width: 0; height: 22px; margin: 0 9px 0 15px; border-left: 1px dotted #9aa8ba; }
.sni { display: flex; align-items: center; width: 51px; }
.sni svg { width: 14px; height: 16px; margin-right: 3px; flex: none; }
.sni b { font-weight: normal; }

/* right */
.right {
  flex: none;
  width: 172px;
  margin-left: 1px;
  display: flex;
  flex-direction: column;
  padding: 5px 2px 7px 2px;
}
.ptitle-r span { letter-spacing: -.3px; }
.ptitle-r .px { margin-left: 6px; }
.tree {
  flex: 1;
  padding: 3px 0 0 13px;
  background: #fff;
  border-left: 1px solid #a9c1de;
  border-right: 1px solid #a9c1de;
  font: 12px/14px "Noto Sans CJK SC", sans-serif;
  letter-spacing: -.2px;
  color: #15181c;
}
.node { display: flex; align-items: center; height: 14px; }
.exp { width: 0; height: 0; border: 4px solid transparent; border-left: 5px solid #c4c8ce; border-right: 0; margin-right: 2px; }
.lead { width: 4px; border-top: 1px dotted #a0a0a0; margin-right: 1px; }
.chk { width: 12px; height: 12px; background: #e3e3e3; border: 1px solid #a8a8a8; margin-right: 3px; margin-left: 1px; display: flex; }
.chk-on { background: #dfe6f0; }
.hscroll {
  flex: none;
  height: 15px;
  display: flex;
  align-items: center;
  padding: 0 6px;
  background: #f3f3f3;
  border-left: 1px solid #a9c1de;
}
.arrow-l { width: 0; height: 0; border: 4px solid transparent; border-right: 4px solid #333; border-left: 0; }
.thumb { width: 16px; height: 15px; margin-left: 11px; background: linear-gradient(90deg, #f5f5f5, #cfcfcf); border: 1px solid #bdbdbd; }
.arrow-r { width: 0; height: 0; border: 4px solid transparent; border-left: 4px solid #333; border-right: 0; margin-left: auto; }

/* status */
.status {
  flex: none;
  height: 18px;
  display: flex;
  gap: 3px;
  background: #f0f0f0;
  border-top: 1px solid #9c9c9c;
  font: 11px/17px "Noto Sans CJK SC", sans-serif;
  color: #20262c;
}
.st { display: block; height: 17px; padding-left: 2px; border-right: 1px solid #c6c6c6; white-space: nowrap; overflow: hidden; }
.st1 { width: 201px; font-family: "Liberation Mono", monospace; font-size: 10px; }
.st2 { width: 101px; }
.st3 { width: 102px; }
.st4 { width: 50px; }
.st5 { width: 504px; font-size: 12px; }
.st6 { flex: 1; border: 0; }

.taskbar {
  position: relative;
  flex: none;
  height: 8px;
  display: flex;
  overflow: hidden;
  padding-left: 244px;
  gap: 2px;
  background: linear-gradient(90deg, #8fb3d6, #b7d1e8 40%, #a9c4de 60%, #8aa0b8 85%, #6f8297);
  border-top: 1px solid #54708c;
}
.start { position: absolute; left: 13px; top: 0; width: 28px; height: 28px; border-radius: 50%; background: #dcebf7; border: 1px solid #5b7793; }
.tk-ic { position: absolute; top: 0; width: 18px; height: 8px; border-radius: 8px 8px 0 0; }
.tk-a { left: 70px; background: #6fae4f; }
.tk-b { left: 138px; background: #c9d2dc; }
.tk-c { left: 208px; background: #e8c23c; }
.tk { width: 60px; height: 8px; background: #cfe2f3; border: 1px solid #eaf3fb; border-bottom: 0; border-radius: 3px 3px 0 0; }
.tk1 { background: #d8e6f2; }
.tray { position: absolute; right: 5px; top: 0; width: 299px; height: 8px; background: linear-gradient(90deg, rgba(110,125,142,0), #6f8297 20%); }
.clock { position: absolute; left: 241px; top: 2px; font: 11px/14px "Liberation Sans", sans-serif; color: #fff; }

.badge72 {
  position: absolute;
  left: 1899px; top: 819px;
  width: 38px; height: 38px;
  border-radius: 50%;
  background: #35c25f;
  border: 2px solid #d7f3de;
  color: #fff;
  font: bold 12px/34px "Liberation Sans", sans-serif;
  padding-left: 8px;
}
.ime {
  position: absolute;
  left: 1736px; top: 1013px;
  width: 184px;
  height: 27px;
  display: flex;
  align-items: flex-end;
}
.ime-s { width: 27px; height: 27px; flex: none; }
.ime-bar {
  flex: 1;
  height: 18px;
  display: flex;
  align-items: center;
  gap: 6px;
  padding-left: 6px;
  background: #fff;
}
.ime-bar svg { width: 16px; height: 16px; flex: none; }
.ime-zh { font: bold 15px/18px "Noto Sans CJK SC", sans-serif; color: #1f6fc0; }
```
